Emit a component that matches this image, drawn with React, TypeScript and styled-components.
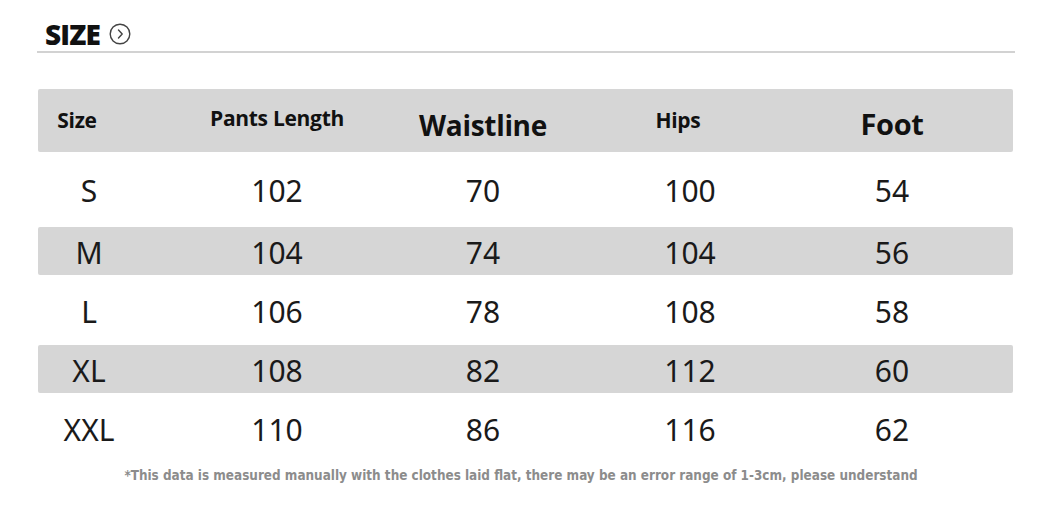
import { FC } from 'react';
import styled, { createGlobalStyle } from 'styled-components';

const GlobalStyle = createGlobalStyle`
  html, body {
    margin: 0;
    padding: 0;
    background: #ffffff;
  }
  body {
    font-family: "Noto Sans", "Open Sans", sans-serif;
    color: #111;
  }
`;

const Page = styled.div`
  width: 1061px;
  height: 518px;
  padding: 18px 46px 0 37px;
  box-sizing: border-box;
  overflow: hidden;
`;

const TitleBar = styled.div`
  display: flex;
  align-items: center;
  gap: 9px;
  padding: 1px 0 2px 8px;
  border-bottom: 2px solid #d2d2d2;
`;

const Title = styled.h1`
  margin: 0;
  font-family: "Open Sans", "Noto Sans", sans-serif;
  font-weight: 800;
  font-size: 28px;
  line-height: 30px;
  letter-spacing: -0.8px;
  color: #111;
`;

const Table = styled.div`
  margin: 36px 2px 0 1px;
  display: flex;
  flex-direction: column;
`;

const Row = styled.div<{ $shade?: boolean; $height: number }>`
  display: grid;
  grid-template-columns: 102px 274px 138px 276px 128px 1fr;
  align-items: center;
  height: ${(p) => p.$height}px;
  background: ${(p) => (p.$shade ? '#d6d6d6' : 'transparent')};
  border-radius: 2px;
`;

const HeadCell = styled.div<{ $size: number; $shift?: number; $lift?: number }>`
  text-align: center;
  white-space: nowrap;
  font-family: "Open Sans", "Noto Sans", sans-serif;
  font-weight: 700;
  font-size: ${(p) => p.$size}px;
  letter-spacing: -0.3px;
  color: #111;
  transform: translate(${(p) => p.$shift ?? 0}px, ${(p) => p.$lift ?? 0}px);
`;

const Cell = styled.div`
  text-align: center;
  font-family: "Noto Sans", "Open Sans", sans-serif;
  font-weight: 400;
  font-size: 30px;
  color: #1a1a1a;
  transform: translateY(1px);
`;

const Note = styled.p`
  margin: 5px 0 0;
  text-align: center;
  padding-right: 10px;
  font-family: "DejaVu Sans Condensed", "Liberation Sans Narrow", sans-serif;
  font-weight: 700;
  font-size: 13.4px;
  color: #8c8c8c;
`;

const CircleArrow: FC = () => (
  <svg width="22" height="22" viewBox="0 0 22 22" fill="none">
    <circle cx="11" cy="11" r="9.8" stroke="#444" strokeWidth="1.4" />
    <path d="M9.5 7 L13.2 11 L9.5 15" stroke="#444" strokeWidth="1.4" strokeLinecap="round" strokeLinejoin="round" />
  </svg>
);

const rows = [
  ['S', '102', '70', '100', '54'],
  ['M', '104', '74', '104', '56'],
  ['L', '106', '78', '108', '58'],
  ['XL', '108', '82', '112', '60'],
  ['XXL', '110', '86', '116', '62'],
];

export default function App() {
  return (
    <Page>
      <GlobalStyle />
      <TitleBar>
        <Title>SIZE</Title>
        <CircleArrow />
      </TitleBar>
      <Table>
        <Row $shade $height={63}>
          <HeadCell $size={21} $shift={-12} $lift={-1}>Size</HeadCell>
          <HeadCell $size={21} $lift={-3}>Pants Length</HeadCell>
          <HeadCell $size={28} $lift={4}>Waistline</HeadCell>
          <HeadCell $size={21} $shift={-12} $lift={-1}>Hips</HeadCell>
          <HeadCell $size={29} $lift={3}>Foot</HeadCell>
        </Row>
        {rows.map((r, i) => (
          <Row key={r[0]} $shade={i % 2 === 1} $height={i === 0 ? 75 : i % 2 === 1 ? 48 : 70}>
            {r.map((v, j) => (
              <Cell key={j}>{v}</Cell>
            ))}
          </Row>
        ))}
      </Table>
      <Note>*This data is measured manually with the clothes laid flat, there may be an error range of 1-3cm, please understand</Note>
    </Page>
  );
}
